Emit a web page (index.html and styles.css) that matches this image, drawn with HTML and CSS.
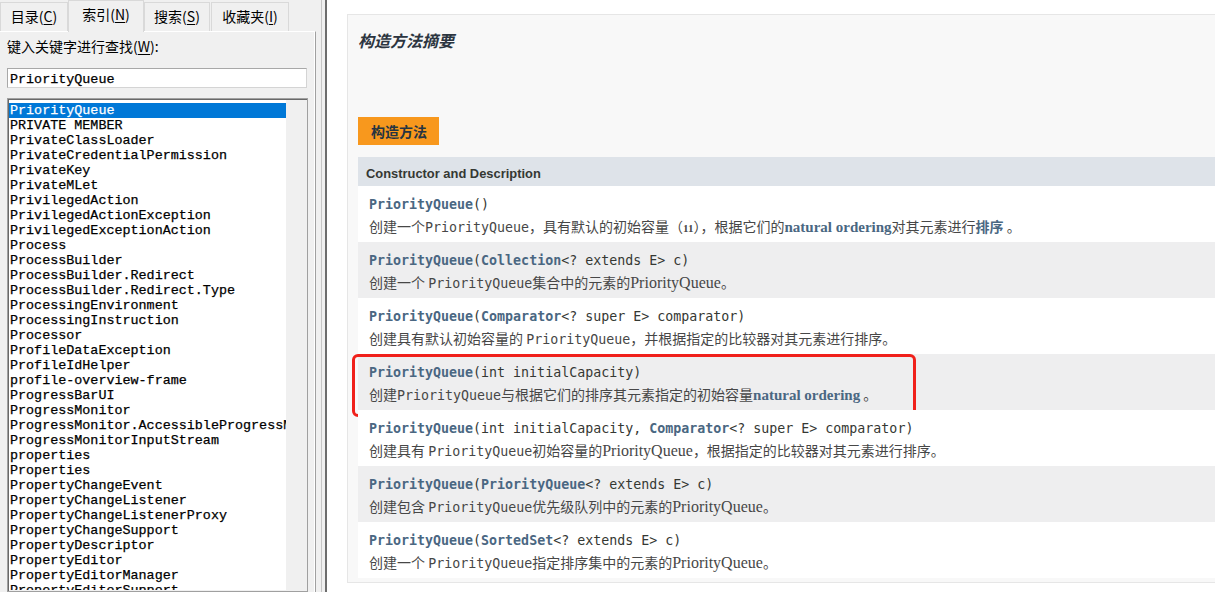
FILE: index.html
```html
<!DOCTYPE html>
<html lang="zh">
<head>
<meta charset="utf-8">
<title>PriorityQueue</title>
<link rel="stylesheet" href="styles.css">
</head>
<body>
<div class="app">
  <aside class="nav">
    <div class="tabs">
      <div class="tab tab-c">目录(<u>C</u>)</div>
      <div class="tab tab-n active">索引(<u>N</u>)</div>
      <div class="tab tab-s">搜索(<u>S</u>)</div>
      <div class="tab tab-i">收藏夹(<u>I</u>)</div>
    </div>
    <div class="panel">
      <div class="field-label">键入关键字进行查找(<u>W</u>):</div>
      <div class="search">PriorityQueue</div>
      <div class="list">
        <ul class="list-items">
          <li class="sel">PriorityQueue</li>
          <li>PRIVATE MEMBER</li>
          <li>PrivateClassLoader</li>
          <li>PrivateCredentialPermission</li>
          <li>PrivateKey</li>
          <li>PrivateMLet</li>
          <li>PrivilegedAction</li>
          <li>PrivilegedActionException</li>
          <li>PrivilegedExceptionAction</li>
          <li>Process</li>
          <li>ProcessBuilder</li>
          <li>ProcessBuilder.Redirect</li>
          <li>ProcessBuilder.Redirect.Type</li>
          <li>ProcessingEnvironment</li>
          <li>ProcessingInstruction</li>
          <li>Processor</li>
          <li>ProfileDataException</li>
          <li>ProfileIdHelper</li>
          <li>profile-overview-frame</li>
          <li>ProgressBarUI</li>
          <li>ProgressMonitor</li>
          <li>ProgressMonitor.AccessibleProgressMonitor</li>
          <li>ProgressMonitorInputStream</li>
          <li>properties</li>
          <li>Properties</li>
          <li>PropertyChangeEvent</li>
          <li>PropertyChangeListener</li>
          <li>PropertyChangeListenerProxy</li>
          <li>PropertyChangeSupport</li>
          <li>PropertyDescriptor</li>
          <li>PropertyEditor</li>
          <li>PropertyEditorManager</li>
          <li>PropertyEditorSupport</li>
        </ul>
      </div>
    </div>
  </aside>
  <div class="splitter"></div>
  <main class="doc">
    <section class="card">
      <h3 class="title">构造方法摘要</h3>
      <div class="caption"><span>构造方法</span></div>
      <div class="table">
        <div class="thead">Constructor and Description</div>
        <div class="row">
          <div class="sig"><b>PriorityQueue</b>()</div>
          <div class="desc">创建一个<code>PriorityQueue</code>，具有默认的初始容量（<span class="num">11</span>），根据它们的<b class="ser">natural ordering</b>对其元素进行<b>排序</b> 。</div>
        </div>
        <div class="row alt">
          <div class="sig"><b>PriorityQueue</b>(<b>Collection</b>&lt;? extends E&gt; c)</div>
          <div class="desc">创建一个 <code>PriorityQueue</code>集合中的元素的<span class="ser">PriorityQueue</span>。</div>
        </div>
        <div class="row">
          <div class="sig"><b>PriorityQueue</b>(<b>Comparator</b>&lt;? super E&gt; comparator)</div>
          <div class="desc">创建具有默认初始容量的 <code>PriorityQueue</code>，并根据指定的比较器对其元素进行排序。</div>
        </div>
        <div class="row alt marked">
          <div class="sig"><b>PriorityQueue</b>(int initialCapacity)</div>
          <div class="desc">创建<code>PriorityQueue</code>与根据它们的排序其元素指定的初始容量<b class="ser">natural ordering</b> 。</div>
          <div class="highlight"></div>
        </div>
        <div class="row">
          <div class="sig"><b>PriorityQueue</b>(int initialCapacity, <b>Comparator</b>&lt;? super E&gt; comparator)</div>
          <div class="desc">创建具有 <code>PriorityQueue</code>初始容量的<span class="ser">PriorityQueue</span>，根据指定的比较器对其元素进行排序。</div>
        </div>
        <div class="row alt">
          <div class="sig"><b>PriorityQueue</b>(<b>PriorityQueue</b>&lt;? extends E&gt; c)</div>
          <div class="desc">创建包含 <code>PriorityQueue</code>优先级队列中的元素的<span class="ser">PriorityQueue</span>。</div>
        </div>
        <div class="row">
          <div class="sig"><b>PriorityQueue</b>(<b>SortedSet</b>&lt;? extends E&gt; c)</div>
          <div class="desc">创建一个 <code>PriorityQueue</code>指定排序集中的元素的<span class="ser">PriorityQueue</span>。</div>
        </div>
      </div>
    </section>
  </main>
</div>
</body>
</html>
```

FILE: styles.css
```css
* {
  box-sizing: border-box;
  margin: 0;
  padding: 0;
}

body {
  margin: 0;
  width: 1215px;
  height: 592px;
  overflow: hidden;
  background: #fff;
  font-family: "Noto Sans CJK SC", sans-serif;
}

.app {
  display: flex;
  height: 592px;
}

/* ---------- left navigation ---------- */
.nav {
  width: 316px;
  flex: none;
  display: flex;
  flex-direction: column;
  background: #f0f0f0;
}

.tabs {
  display: flex;
  align-items: flex-end;
  height: 31px;
  position: relative;
  z-index: 1;
}

.tab {
  height: 29px;
  border: 1px solid #d9d9d9;
  border-bottom: none;
  background: #f0f0f0;
  font-size: 14px;
  line-height: 26px;
  text-align: center;
  color: #000;
}

.tab u {
  text-decoration: underline;
  text-underline-offset: 2px;
}

.tab.active {
  height: 32px;
  margin-bottom: -1px;
  line-height: 27px;
  background: #f0f0f0;
  border-color: #d9d9d9;
}

.tab-c { width: 68px; }
.tab-n { width: 76px; }
.tab-s { width: 66px; }
.tab-i { width: 78px; margin-left: 1px; }

.panel {
  flex: 1;
  border-top: 1px solid #fff;
  border-right: 1px solid #a0a0a0;
  box-shadow: inset -1px 0 0 #fff;
  padding: 4px 0 0 7px;
  display: flex;
  flex-direction: column;
  min-height: 0;
}

.field-label {
  font-size: 14px;
  line-height: 20px;
  color: #000;
}

.field-label u {
  text-underline-offset: 2px;
}

.search {
  margin-top: 12px;
  width: 300px;
  height: 20px;
  background: #fff;
  border: 1px solid #d4d4d4;
  border-top-color: #a8a8a8;
  border-left-color: #a8a8a8;
  font-family: "Liberation Mono", monospace;
  font-size: 13.4px;
  line-height: 18px;
  padding: 2px 0 0 2px;
  color: #000;
  -webkit-text-stroke: 0.25px #000;
}

.list {
  margin-top: 10px;
  width: 301px;
  flex: 1;
  background: #f0f0f0;
  border: 1px solid #a0a0a0;
  box-shadow: inset 1px 1px 0 #696969;
  padding: 2px 0 0 1px;
  overflow: hidden;
}

.list-items {
  list-style: none;
  width: 277px;
  height: 100%;
  background: #fff;
  margin-top: -1px;
  padding-top: 3px;
  overflow: hidden;
}

.list-items li {
  height: 15px;
  line-height: 15px;
  padding-left: 1px;
  white-space: nowrap;
  overflow: hidden;
  font-family: "Liberation Mono", monospace;
  font-size: 13.4px;
  color: #000;
  -webkit-text-stroke: 0.25px #000;
}

.list-items li.sel {
  background: #0078d7;
  color: #fff;
  -webkit-text-stroke: 0.25px #fff;
}

.splitter {
  width: 11px;
  flex: none;
  background: linear-gradient(to right,
    #f0f0f0 0, #f0f0f0 5px,
    #c6c6c6 5px, #c6c6c6 6px,
    #f0f0f0 6px, #f0f0f0 9px,
    #6d6d6d 9px, #6d6d6d 11px);
}

/* ---------- document ---------- */
.doc {
  flex: 1;
  min-width: 0;
  overflow: hidden;
  padding: 14px 0 0 20px;
  background: #fff;
}

.card {
  width: 1000px;
  height: 569px;
  background: #f8f8f8;
  border: 1px solid #e6e6e6;
  padding: 15px 0 0 10px;
}

.title {
  font-size: 16px;
  line-height: 20px;
  font-style: italic;
  font-weight: bold;
  color: #2c3540;
}

.caption {
  margin-top: 67px;
  display: flex;
}

.caption span {
  display: block;
  height: 28px;
  line-height: 28px;
  padding: 0 12px 0 13px;
  background: #f8981d;
  color: #253441;
  font-size: 14px;
  font-weight: bold;
}

.table {
  margin-top: 12px;
}

.thead {
  height: 29px;
  background: #dee3e9;
  padding: 9px 0 0 8px;
  font-family: "Liberation Sans", Arial, sans-serif;
  font-weight: bold;
  font-size: 12.9px;
  line-height: 16px;
  color: #353833;
}

.row {
  position: relative;
  height: 56px;
  padding: 10px 0 0 11px;
  background: #fff;
}

.row.alt {
  background: #eeeeef;
}

.sig {
  font-family: "DejaVu Sans Mono", monospace;
  font-size: 13.3px;
  line-height: 18px;
  color: #353833;
  white-space: nowrap;
}

.sig b {
  color: #4a6782;
  font-weight: bold;
}

.desc {
  margin-top: 2px;
  font-size: 14px;
  line-height: 20px;
  color: #474747;
  white-space: nowrap;
}

.desc code {
  font-family: "DejaVu Sans Mono", monospace;
  font-size: 13.3px;
  color: #474747;
}

.desc b {
  color: #4a6782;
  font-weight: bold;
}

.desc .ser {
  font-family: "Liberation Serif", serif;
  font-size: 16px;
}

.desc b.ser {
  font-size: 15px;
  color: #4a6782;
}

.desc .num {
  font-family: "Liberation Serif", serif;
  font-size: 11px;
  font-weight: bold;
}

.highlight {
  position: absolute;
  left: -6px;
  top: 0;
  width: 564px;
  height: 63px;
  border: 3px solid #f0201a;
  border-radius: 6px;
  pointer-events: none;
}
```
